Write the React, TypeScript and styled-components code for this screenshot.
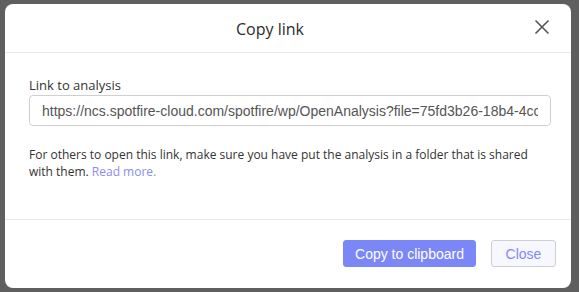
import React from "react";
import styled, { createGlobalStyle } from "styled-components";

const Global = createGlobalStyle`
  html, body { margin: 0; padding: 0; background: #5f5f5f; }
  body { width: 579px; height: 292px; overflow: hidden; }
`;

const Backdrop = styled.div`
  width: 579px;
  height: 292px;
  box-sizing: border-box;
  padding: 4px 8px 4px 5px;
  background: #5f5f5f;
`;

const Dialog = styled.div`
  width: 566px;
  height: 284px;
  background: #fff;
  border-radius: 8px;
  display: flex;
  flex-direction: column;
  font-family: "Open Sans", "Noto Sans", sans-serif;
  color: #333;
  overflow: hidden;
`;

const Header = styled.div`
  height: 48px;
  border-bottom: 1px solid #e6e9f5;
  display: flex;
  align-items: center;
  justify-content: center;
  padding-right: 36px;
  position: relative;
`;

const Title = styled.h1`
  margin: 0;
  font-size: 16px;
  font-weight: 400;
  color: #2b2b2b;
  padding-top: 1px;
`;

const CloseIcon = styled.button`
  position: absolute;
  right: 18px;
  top: 12px;
  width: 22px;
  height: 22px;
  padding: 0;
  border: 0;
  background: none;
  display: flex;
  align-items: center;
  justify-content: center;
`;

const Body = styled.div`
  padding: 23px 19px 0 24px;
  height: 167px;
  box-sizing: border-box;
  border-bottom: 1px solid #e6e9f5;
`;

const Label = styled.div`
  font-size: 13px;
  line-height: 18px;
  color: #333;
  margin-bottom: 1px;
`;

const LinkInput = styled.input`
  width: 522px;
  height: 31px;
  box-sizing: border-box;
  border: 1px solid #cfcfcf;
  border-radius: 4px;
  padding: 0 12px;
  font-family: "Liberation Sans", Arial, sans-serif;
  font-size: 14px;
  color: #555;
  outline: none;
  background: #fff;
`;

const Note = styled.p`
  margin: 20px 0 0;
  font-size: 12px;
  line-height: 17px;
  color: #333;
`;

const ReadMore = styled.a`
  color: #8b8cf2;
  text-decoration: none;
`;

const Footer = styled.div`
  flex: 1;
  display: flex;
  justify-content: flex-end;
  align-items: flex-start;
  gap: 15px;
  padding: 20px 15px 0 0;
`;

const Button = styled.button<{ $primary?: boolean }>`
  height: 27px;
  box-sizing: border-box;
  border-radius: 3px;
  font-family: "Liberation Sans", Arial, sans-serif;
  font-size: 14px;
  padding: 0;
  width: ${(p) => (p.$primary ? "133px" : "65px")};
  background: ${(p) => (p.$primary ? "#7b87f6" : "#f6f7ff")};
  color: ${(p) => (p.$primary ? "#fff" : "#8588f5")};
  border: 1px solid ${(p) => (p.$primary ? "#7b87f6" : "#cfcfcf")};
`;

export default function App() {
  return (
    <>
      <Global />
      <Backdrop>
        <Dialog>
          <Header>
            <Title>Copy link</Title>
            <CloseIcon aria-label="Close">
              <svg width="16" height="16" viewBox="0 0 16 16">
                <path d="M1.5 1.5 L14.5 14.5 M14.5 1.5 L1.5 14.5" stroke="#555" strokeWidth="1.6" fill="none" />
              </svg>
            </CloseIcon>
          </Header>
          <Body>
            <Label>Link to analysis</Label>
            <LinkInput
              readOnly
              value="https://ncs.spotfire-cloud.com/spotfire/wp/OpenAnalysis?file=75fd3b26-18b4-4cc0-9a1e"
            />
            <Note>
              For others to open this link, make sure you have put the analysis in a folder that is shared
              with them. <ReadMore href="#">Read more.</ReadMore>
            </Note>
          </Body>
          <Footer>
            <Button $primary>Copy to clipboard</Button>
            <Button>Close</Button>
          </Footer>
        </Dialog>
      </Backdrop>
    </>
  );
}
